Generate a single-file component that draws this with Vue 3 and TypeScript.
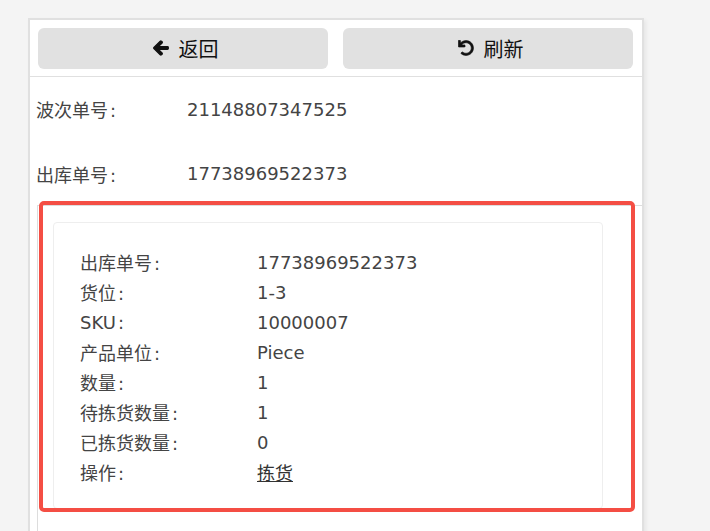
<script setup lang="ts">
const summary = [
  { label: '波次单号', value: '21148807347525' },
  { label: '出库单号', value: '17738969522373' },
]
const details = [
  { label: '出库单号', value: '17738969522373' },
  { label: '货位', value: '1-3' },
  { label: 'SKU', value: '10000007' },
  { label: '产品单位', value: 'Piece' },
  { label: '数量', value: '1' },
  { label: '待拣货数量', value: '1' },
  { label: '已拣货数量', value: '0' },
]
</script>

<template>
  <div class="page">
    <div class="panel">
      <div class="toolbar">
        <button class="btn" type="button">
          <svg class="icon" viewBox="-20 -20 488 552" width="16" height="18" aria-hidden="true">
            <path fill="currentColor" stroke="currentColor" stroke-width="40" stroke-linejoin="round" d="M257.5 445.1l-22.2 22.2c-9.4 9.4-24.6 9.4-33.9 0L7 273c-9.4-9.4-9.4-24.6 0-33.9L201.4 44.7c9.4-9.4 24.6-9.4 33.9 0l22.2 22.2c9.5 9.5 9.3 25-.4 34.3L136.6 216H424c13.3 0 24 10.7 24 24v32c0 13.3-10.7 24-24 24H136.6l120.5 114.8c9.8 9.3 10 24.8.4 34.3z" />
          </svg>
          <span>返回</span>
        </button>
        <button class="btn" type="button">
          <svg class="icon" viewBox="-10 -10 532 532" width="16" height="16" aria-hidden="true">
            <path fill="currentColor" stroke="currentColor" stroke-width="20" stroke-linejoin="round" d="M212.333 224.333H12c-6.627 0-12-5.373-12-12V12C0 5.373 5.373 0 12 0h48c6.627 0 12 5.373 12 12v78.112C117.773 39.279 184.26 7.47 258.175 8.007c136.906.994 246.448 111.623 246.157 248.532C504.041 393.258 393.12 504 256.333 504c-64.089 0-122.496-24.313-166.51-64.215-5.099-4.622-5.334-12.554-.467-17.42l33.967-33.967c4.474-4.474 11.662-4.717 16.401-.525C170.76 415.336 211.58 432 256.333 432c97.268 0 176-78.716 176-176 0-97.267-78.716-176-176-176-58.496 0-110.28 28.476-142.274 72.333h98.274c6.627 0 12 5.373 12 12v48c0 6.627-5.373 12-12 12z" />
          </svg>
          <span>刷新</span>
        </button>
      </div>

      <div v-for="row in summary" :key="row.label" class="summary-row">
        <span class="summary-label">{{ row.label }}<span class="colon">:</span></span>
        <span>{{ row.value }}</span>
      </div>

      <div class="section">
        <div class="card">
          <div v-for="row in details" :key="row.label" class="detail-row">
            <span class="detail-label">{{ row.label }}<span class="colon">:</span></span>
            <span>{{ row.value }}</span>
          </div>
          <div class="detail-row">
            <span class="detail-label">操作<span class="colon">:</span></span>
            <a class="action" href="#">拣货</a>
          </div>
        </div>
      </div>
    </div>
    <div class="highlight"></div>
  </div>
</template>

<style scoped>
.page {
  position: relative;
  height: 531px;
  overflow: hidden;
  padding: 18px 0 0 28px;
  box-sizing: border-box;
  background: #f4f4f4;
  color: #444;
  font-family: "DejaVu Sans", "Noto Sans CJK SC", sans-serif;
  font-size: 18px;
}
.panel {
  width: 616px;
  height: 560px;
  box-sizing: border-box;
  overflow: hidden;
  background: #fff;
  border: 2px solid #e0e0e0;
  border-width: 2px 2px 0 2px;
  box-shadow: 2px 2px 4px rgba(0, 0, 0, 0.06);
}
.toolbar {
  display: flex;
  gap: 15px;
  padding: 8px 8px 7px;
  border-bottom: 1px solid #e0e0e0;
}
.btn {
  flex: 0 0 290px;
  height: 41px;
  display: flex;
  align-items: center;
  justify-content: center;
  gap: 10px;
  padding: 0 0 0 5px;
  border: 0;
  border-radius: 6px;
  background: #e1e1e1;
  color: #111;
  font-family: "Noto Sans CJK SC", sans-serif;
  font-size: 20px;
}
.icon {
  display: block;
  margin-top: -2px;
}
.summary-row {
  display: flex;
  align-items: center;
  height: 64px;
  padding-left: 7px;
}
.summary-label {
  width: 150px;
  margin-left: -1px;
  margin-right: 1px;
}
.summary-row + .summary-row .summary-label {
  padding-top: 2px;
}
.colon {
  margin-left: 2px;
}
.section {
  margin-left: 7px;
  width: 700px;
  padding: 16px 0 60px 15px;
  border-top: 1px solid #ddd;
  border-left: 1px solid #ddd;
}
.card {
  width: 550px;
  height: 287px;
  box-sizing: border-box;
  padding: 24px 0 0 27px;
  border: 1px solid #eee;
  border-radius: 4px;
}
.detail-row {
  display: flex;
  align-items: center;
  height: 30px;
}
.detail-label {
  width: 176px;
  margin-left: -1px;
  margin-right: 1px;
}
.action {
  color: #333;
  text-decoration: underline;
}
.highlight {
  position: absolute;
  left: 39px;
  top: 201px;
  width: 596px;
  height: 311px;
  box-sizing: border-box;
  border: 4px solid #f44e44;
  border-radius: 5px;
  pointer-events: none;
}
</style>

<style>
html,
body {
  margin: 0;
  overflow: hidden;
}
</style>
